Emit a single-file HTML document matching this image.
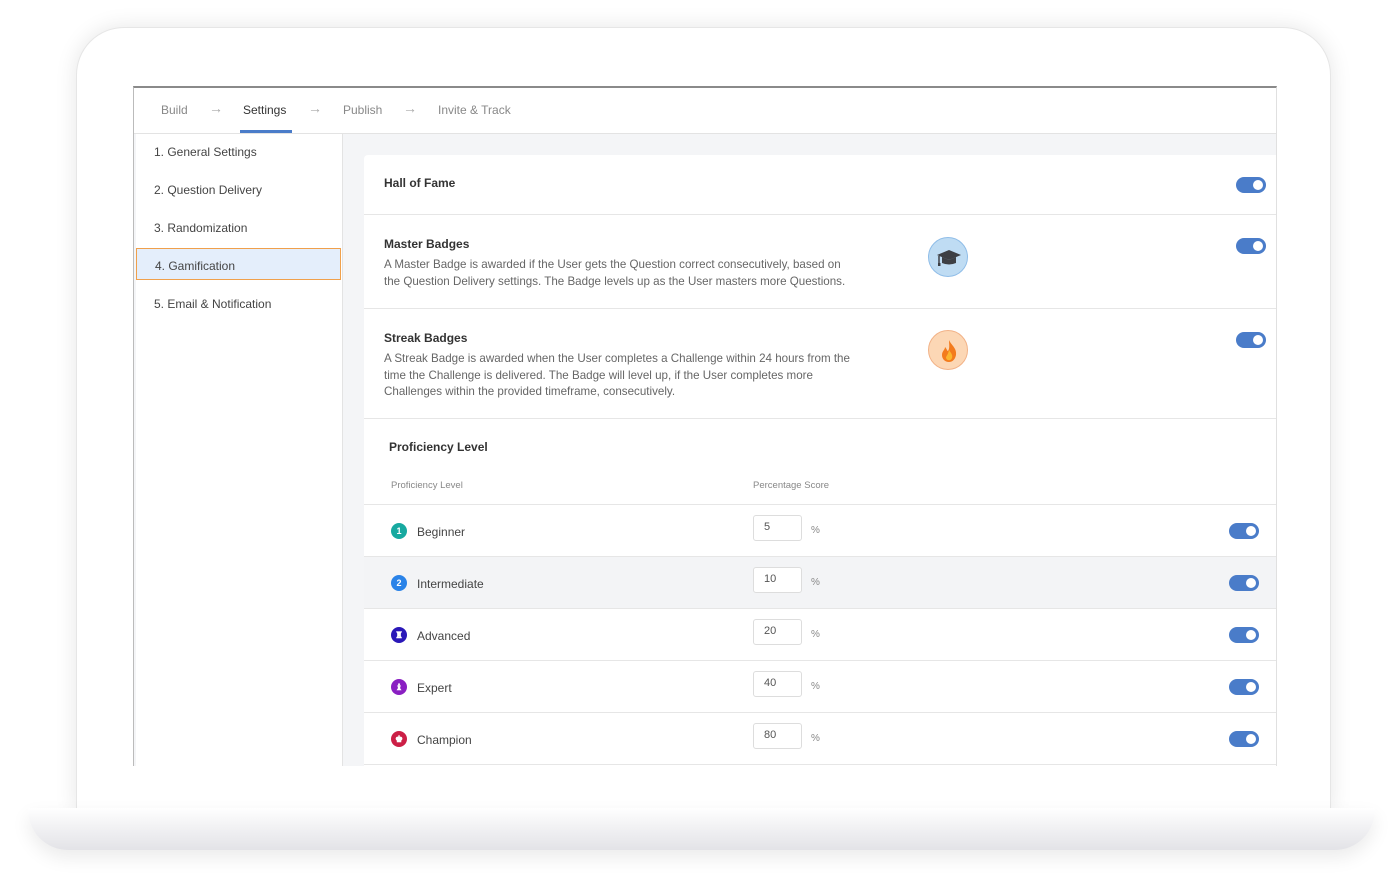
<!DOCTYPE html>
<html><head><style>
*{box-sizing:border-box;margin:0;padding:0}
body{width:1397px;height:880px;background:#fff;position:relative;overflow:hidden;font-family:"Liberation Sans",sans-serif;color:#333}
.lid{position:absolute;left:76px;top:27px;width:1255px;height:785px;background:#fff;border-radius:48px 48px 0 0;box-shadow:0 0 22px rgba(0,0,0,.10);border:1px solid #e6e6e6}
.base{position:absolute;left:28px;top:808px;width:1347px;height:42px;border-radius:0 0 40px 40px;background:linear-gradient(#fff 0%,#f3f3f5 40%,#e3e3e7 100%);box-shadow:0 8px 18px rgba(0,0,0,.08)}
.screen{position:absolute;left:133px;top:86px;width:1144px;height:680px;background:#f4f5f7;border-top:2px solid #8a8a8a;border-left:1px solid #bbb;border-right:1px solid #e0e0e0;overflow:hidden}
.tabs{position:absolute;left:0;top:0;width:100%;height:46px;background:#fff;border-bottom:1px solid #e3e3e3;font-size:12px;color:#888}
.tabs span{position:absolute;top:15px}
.tabs .ar{color:#aaa;font-size:14px;top:12px}
.side{position:absolute;left:2px;top:46px;width:207px;height:640px;background:#fff;border-right:1px solid #e3e3e3;font-size:12px;color:#444}
.side div{position:absolute;left:0;width:205px;height:32px;padding:9px 0 0 18px}
.card{position:absolute;left:230px;top:67px;width:914px;height:620px;background:#fff;border-radius:4px 0 0 0}
.row{position:absolute;left:0;width:914px;border-bottom:1px solid #e6e6e6}
.t{font-size:12px;font-weight:bold;color:#333;position:absolute;left:20px}
.d{font-size:11.6px;color:#666;line-height:16.5px;position:absolute;left:20px}
.tg{position:absolute;width:30px;height:16px;border-radius:8px;background:#4a7cc9}
.tg:after{content:"";position:absolute;right:3px;top:3px;width:10px;height:10px;border-radius:50%;background:#fff}
.ic{position:absolute;left:564px;width:40px;height:40px;border-radius:50%}
.lv{position:absolute;left:27px;width:16px;height:16px;border-radius:50%;color:#fff;font-size:9px;font-weight:bold;text-align:center;line-height:16px}
.ln{position:absolute;left:53px;font-size:12px;color:#444}
.in{position:absolute;left:389px;width:49px;height:26px;border:1px solid #ddd;border-radius:3px;font-size:11px;color:#555;padding:5px 0 0 10px}
.pc{position:absolute;left:447px;font-size:10px;color:#888}
</style></head><body>
<div class="lid"></div>
<div class="base"></div>
<div class="screen">
 <div class="tabs">
  <span style="left:27px">Build</span><span class="ar" style="left:75px">→</span>
  <span style="left:109px;color:#333">Settings</span><span class="ar" style="left:174px">→</span>
  <span style="left:209px">Publish</span><span class="ar" style="left:269px">→</span>
  <span style="left:304px">Invite &amp; Track</span>
  <div style="position:absolute;left:106px;top:42px;width:52px;height:3px;background:#4a7cc9"></div>
 </div>
 <div class="side">
  <div style="top:2px">1. General Settings</div>
  <div style="top:40px">2. Question Delivery</div>
  <div style="top:78px">3. Randomization</div>
  <div style="top:114px;background:#e4eefb;border:1px solid #f0a04b;padding-top:10px">4. Gamification</div>
  <div style="top:154px">5. Email &amp; Notification</div>
 </div>
 <div class="card">
  <div class="row" style="top:0;height:60px"><span class="t" style="top:21px">Hall of Fame</span><div class="tg" style="left:872px;top:22px"></div></div>
  <div class="row" style="top:60px;height:94px"><span class="t" style="top:22px">Master Badges</span>
   <div class="d" style="top:42px">A Master Badge is awarded if the User gets the Question correct consecutively, based on<br>the Question Delivery settings. The Badge levels up as the User masters more Questions.</div>
   <div class="ic" style="top:22px;background:#bfdcf3;border:1.5px solid #8fbde8"><svg width="40" height="40" viewBox="0 0 40 40"><path d="M8 17 L20 12 L32 17 L20 22Z" fill="#3d3f44"/><path d="M13 19 v6 q7 3 14 0 v-6 l-7 3z" fill="#3d3f44"/><path d="M10 18 v8" stroke="#3d3f44" stroke-width="1.5"/><rect x="9" y="25" width="2.5" height="3" fill="#3d3f44"/></svg></div>
   <div class="tg" style="left:872px;top:23px"></div></div>
  <div class="row" style="top:154px;height:110px"><span class="t" style="top:22px">Streak Badges</span>
   <div class="d" style="top:42px">A Streak Badge is awarded when the User completes a Challenge within 24 hours from the<br>time the Challenge is delivered. The Badge will level up, if the User completes more<br>Challenges within the provided timeframe, consecutively.</div>
   <div class="ic" style="top:21px;background:#fcd7b5;border:1.5px solid #f2b287"><svg width="40" height="40" viewBox="0 0 40 40"><path d="M20 9 C22 14 28 17 27 24 C26 29 23 31 20 31 C16 31 13 28 13 24 C13 20 16 19 16 16 C18 18 18 20 19 20 C21 17 20 13 20 9Z" fill="#f37b1d"/><path d="M20 19 C22 22 24 24 23 27 C22 30 18 30 17 27 C17 25 19 24 20 19Z" fill="#fbb52e"/></svg></div>
   <div class="tg" style="left:872px;top:23px"></div></div>
  <div class="row" style="top:264px;height:86px"><span class="t" style="top:21px;left:25px">Proficiency Level</span>
   <span style="position:absolute;left:27px;top:61px;font-size:9.5px;color:#888">Proficiency Level</span>
   <span style="position:absolute;left:389px;top:61px;font-size:9.5px;color:#888">Percentage Score</span></div>
  <div class="row" style="top:350px;height:52px"><div class="lv" style="top:18px;background:#17a9a0">1</div><span class="ln" style="top:20px">Beginner</span><div class="in" style="top:10px">5</div><span class="pc" style="top:20px">%</span><div class="tg" style="left:865px;top:18px"></div></div>
  <div class="row" style="top:402px;height:52px;background:#f3f4f6"><div class="lv" style="top:18px;background:#2a83e8">2</div><span class="ln" style="top:20px">Intermediate</span><div class="in" style="top:10px;background:#fff">10</div><span class="pc" style="top:20px">%</span><div class="tg" style="left:865px;top:18px"></div></div>
  <div class="row" style="top:454px;height:52px"><div class="lv" style="top:18px;background:#2a18b8">♜</div><span class="ln" style="top:20px">Advanced</span><div class="in" style="top:10px">20</div><span class="pc" style="top:20px">%</span><div class="tg" style="left:865px;top:18px"></div></div>
  <div class="row" style="top:506px;height:52px"><div class="lv" style="top:18px;background:#8a1fc2">♝</div><span class="ln" style="top:20px">Expert</span><div class="in" style="top:10px">40</div><span class="pc" style="top:20px">%</span><div class="tg" style="left:865px;top:18px"></div></div>
  <div class="row" style="top:558px;height:52px"><div class="lv" style="top:18px;background:#cc1f46">♚</div><span class="ln" style="top:20px">Champion</span><div class="in" style="top:10px">80</div><span class="pc" style="top:20px">%</span><div class="tg" style="left:865px;top:18px"></div></div>
 </div>
</div>
</body></html>
